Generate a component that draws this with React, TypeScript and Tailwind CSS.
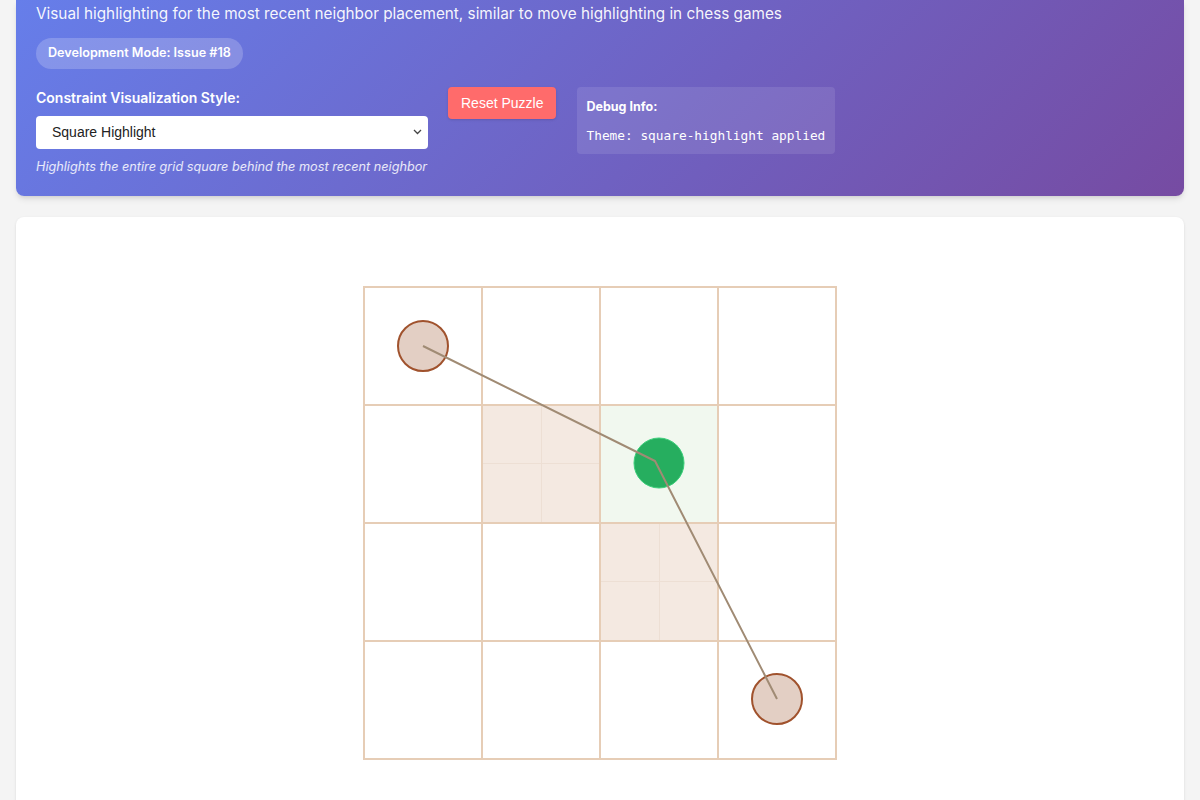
import React from 'react';

const SANS = { fontFamily: 'Inter, "Noto Sans", sans-serif' };

type Cell = 'none' | 'constraint' | 'recent';

const cells: Cell[][] = [
  ['none', 'none', 'none', 'none'],
  ['none', 'constraint', 'recent', 'none'],
  ['none', 'none', 'constraint', 'none'],
  ['none', 'none', 'none', 'none'],
];

function GridCell({ kind }: { kind: Cell }) {
  if (kind === 'constraint') {
    return (
      <div className="grid h-[116px] w-[116px] grid-cols-2 grid-rows-2 gap-px bg-[#eddfd4]">
        <div className="bg-[#f4e9e1]" />
        <div className="bg-[#f4e9e1]" />
        <div className="bg-[#f4e9e1]" />
        <div className="bg-[#f4e9e1]" />
      </div>
    );
  }
  if (kind === 'recent') {
    return <div className="h-[116px] w-[116px] bg-[#f1f8ef]" />;
  }
  return <div className="h-[116px] w-[116px] bg-white" />;
}

function Board() {
  return (
    <div className="relative w-[474px]">
      <div className="grid grid-cols-4 gap-[2px] bg-[#e6cdb6] p-[2px]">
        {cells.flatMap((row, r) => row.map((kind, c) => <GridCell key={`${r}-${c}`} kind={kind} />))}
      </div>
      <svg className="pointer-events-none absolute inset-0" width="474" height="474" viewBox="0 0 474 474">
        <circle cx="60" cy="60" r="25" fill="#e3cfc4" stroke="#a0522d" strokeWidth="2" />
        <circle cx="296" cy="177" r="25" fill="#26ae5f" stroke="#3ccf7a" strokeWidth="1" />
        <circle cx="414" cy="413" r="25" fill="#e3cfc4" stroke="#a0522d" strokeWidth="2" />
        <polyline
          points="60,60 292,175 414,413"
          fill="none"
          stroke="#a08b74"
          strokeWidth="2"
          strokeLinejoin="round"
        />
      </svg>
    </div>
  );
}

export default function App() {
  return (
    <div className="min-h-screen bg-[#f4f4f4] px-4 pb-8" style={SANS}>
      <header className="rounded-b-lg bg-[linear-gradient(135deg,#667eea_0%,#764ba2_100%)] px-5 pb-[20px] pt-[3px] text-white shadow-md">
        <p className="text-[15.3px] text-white/95">
          Visual highlighting for the most recent neighbor placement, similar to move highlighting in chess games
        </p>

        <span className="mt-[12px] inline-block rounded-full bg-white/20 px-3 py-[6px] text-[12.6px] font-semibold">
          Development Mode: Issue #18
        </span>

        <div className="mt-[19px] flex items-start gap-5">
          <div className="w-[392px]">
            <label className="block text-sm font-semibold">Constraint Visualization Style:</label>
            <div className="relative mt-[8px]">
              <select
                className="h-[33px] w-full appearance-none rounded bg-white pl-4 text-sm text-[#222]"
                style={{ fontFamily: '"Liberation Sans", Arial, sans-serif' }}
                defaultValue="square"
              >
                <option value="square">Square Highlight</option>
              </select>
              <svg className="pointer-events-none absolute right-[6px] top-[13px]" width="9" height="6" viewBox="0 0 9 6">
                <path d="M1 1l3.5 3.5L8 1" fill="none" stroke="#444" strokeWidth="1.3" />
              </svg>
            </div>
            <p className="mt-[8px] text-[12.7px] italic text-white/85">
              Highlights the entire grid square behind the most recent neighbor
            </p>
          </div>

          <button
            className="-mt-px h-[32px] rounded bg-[#ff6b6b] px-[13px] text-sm text-white shadow-sm"
            style={{ fontFamily: '"Liberation Sans", Arial, sans-serif' }}
          >
            Reset Puzzle
          </button>

          <div className="-mt-px ml-px h-[67px] w-[258px] rounded bg-white/10 px-[9px] pt-[11px]">
            <div className="text-[12.5px] font-bold">Debug Info:</div>
            <div
              className="mt-[9px] whitespace-nowrap text-[12.8px]"
              style={{ fontFamily: '"DejaVu Sans Mono", monospace' }}
            >
              Theme: square-highlight applied
            </div>
          </div>
        </div>
      </header>

      <main className="mt-[21px] flex justify-center rounded-lg bg-white pb-16 pt-[69px] shadow-sm">
        <Board />
      </main>
    </div>
  );
}
